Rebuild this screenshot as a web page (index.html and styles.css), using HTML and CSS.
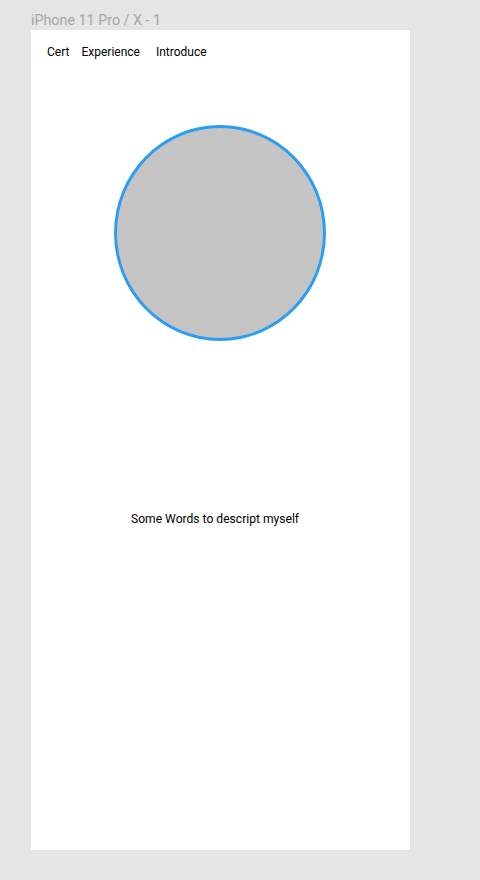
FILE: index.html
```html
<!DOCTYPE html>
<html>
<head>
<meta charset="utf-8">
<link rel="stylesheet" href="styles.css">
</head>
<body>
<div class="canvas">
  <div class="frame-label">iPhone 11 Pro / X - 1</div>
  <div class="frame">
    <nav class="nav">
      <span class="nav-item cert">Cert</span>
      <span class="nav-item exp">Experience</span>
      <span class="nav-item">Introduce</span>
    </nav>
    <div class="avatar"></div>
    <p class="bio">Some Words to descript myself</p>
  </div>
</div>
</body>
</html>
```
FILE: styles.css
```css
html, body {
  margin: 0;
  padding: 0;
  background: #e5e5e5;
  font-family: Roboto, "Liberation Sans", sans-serif;
}
.canvas {
  padding: 12px 0 0 31px;
  height: 868px;
  box-sizing: border-box;
}
.frame-label {
  font-size: 14.3px;
  line-height: 16px;
  color: #a6a6a6;
  height: 18px;
}
.frame {
  width: 379px;
  height: 820px;
  background: #fff;
  display: flex;
  flex-direction: column;
}
.nav {
  display: flex;
  padding: 15px 0 0 16px;
  font-size: 12px;
  line-height: 15px;
  color: #000;
}
.nav-item.cert { margin-right: 12px; }
.nav-item.exp { margin-right: 16px; }
.avatar {
  margin: 65px 0 0 83px;
  width: 212px;
  height: 216px;
  border-radius: 50%;
  background: #c4c4c4;
  border: 3px solid #2a9df4;
  box-sizing: border-box;
}
.bio {
  margin: 171px 0 0 100px;
  font-size: 12.1px;
  line-height: 15px;
  color: #000;
}
```
